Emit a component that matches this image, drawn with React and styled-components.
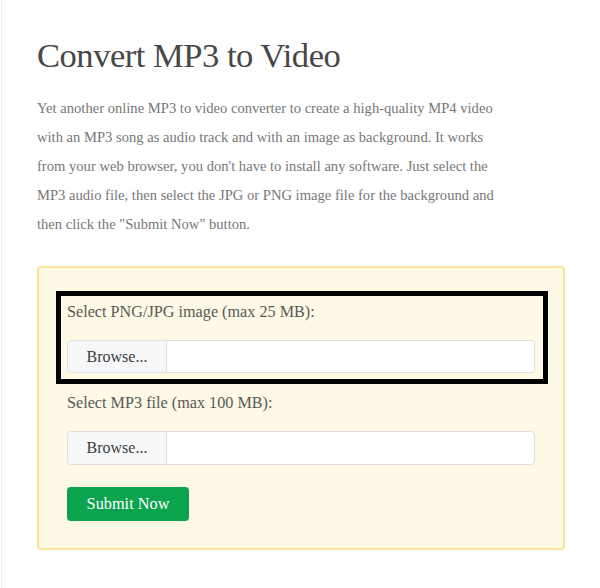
import React from 'react';
import styled, { createGlobalStyle } from 'styled-components';

const GlobalStyle = createGlobalStyle`
    body {
        margin: 0;
        background: #fff;
        font-family: "Liberation Serif", "Times New Roman", serif;
    }
`;

const Sheet = styled.div`
    min-height: 588px;
    box-sizing: border-box;
    margin-left: 1px;
    border-left: 1px solid #eeeeee;
    padding: 33px 34px 0 35px;
`;

const Title = styled.h1`
    margin: 0 0 17px;
    font-size: 34.6px;
    line-height: 44px;
    font-weight: 400;
    letter-spacing: -0.5px;
    color: #474747;
`;

const Intro = styled.p`
    margin: 0 0 27px;
    max-width: 470px;
    font-size: 14.6px;
    line-height: 29px;
    color: #777;
`;

const Card = styled.form`
    width: 528px;
    box-sizing: border-box;
    padding: 32px 28px 27px;
    background: #fef8e6;
    border: 2px solid #f8e49b;
    border-radius: 4px;
`;

const Field = styled.div`
    position: relative;
    margin-bottom: ${(p) => p.$last ? '22px' : '18px'};

    ${(p) => p.$marked && `
        &::after {
            content: '';
            position: absolute;
            left: -11px;
            right: -13px;
            top: -9px;
            bottom: -11px;
            border: 5px solid #000;
            pointer-events: none;
        }
    `}
`;

const Label = styled.label`
    display: block;
    margin-bottom: 16px;
    font-size: 16.2px;
    line-height: 24px;
    color: #585858;
`;

const FileGroup = styled.div`
    display: flex;
    height: ${(p) => p.$tall ? '34px' : '33px'};
    box-sizing: border-box;
    border: 1px solid #dedede;
    border-radius: 4px;
    background: #fff;
    overflow: hidden;
`;

const Browse = styled.span`
    width: 98px;
    display: flex;
    align-items: center;
    justify-content: center;
    background: #f6f7f9;
    border-right: 1px solid #dedede;
    font-size: 16px;
    color: #3c3c3c;
`;

const FileName = styled.span`
    flex: 1;
`;

const Submit = styled.button`
    width: 122px;
    height: 34px;
    padding: 0;
    border: none;
    border-radius: 4px;
    background: #0ca34f;
    color: #fff;
    font-family: inherit;
    font-size: 16.3px;
    cursor: pointer;
`;

const fields = [
    { label: 'Select PNG/JPG image (max 25 MB):', marked: true },
    { label: 'Select MP3 file (max 100 MB):', last: true },
];

const App = () => {
    return (
        <>
            <GlobalStyle />
            <Sheet>
                <Title>Convert MP3 to Video</Title>
                <Intro>
                    Yet another online MP3 to video converter to create a high-quality MP4 video
                    with an MP3 song as audio track and with an image as background. It works
                    from your web browser, you don't have to install any software. Just select the
                    MP3 audio file, then select the JPG or PNG image file for the background and
                    then click the "Submit Now" button.
                </Intro>
                <Card onSubmit={(e) => e.preventDefault()}>
                    {fields.map((f) => (
                        <Field key={f.label} $marked={f.marked} $last={f.last}>
                            <Label>{f.label}</Label>
                            <FileGroup $tall={f.last}>
                                <Browse>Browse...</Browse>
                                <FileName />
                            </FileGroup>
                        </Field>
                    ))}
                    <Submit type="submit">Submit Now</Submit>
                </Card>
            </Sheet>
        </>
    );
}

export default App;
